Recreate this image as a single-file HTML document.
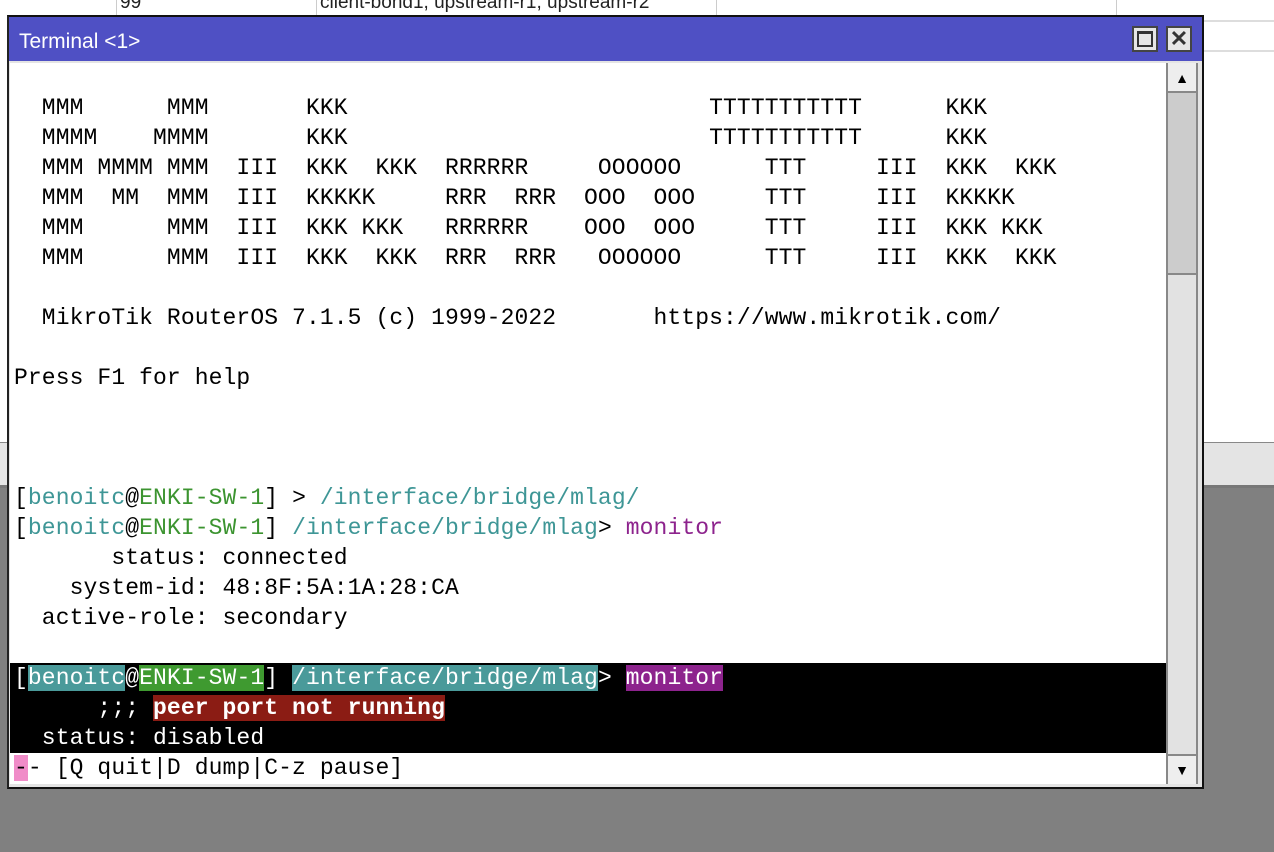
<!DOCTYPE html>
<html><head><meta charset="utf-8"><style>
html,body{margin:0;padding:0;width:1274px;height:852px;overflow:hidden;background:#fff;position:relative;font-family:"Liberation Sans",sans-serif}
.bgtop{position:absolute;left:0;top:0;width:1274px;height:490px;background:#fff}
.band{position:absolute;left:0;top:442px;width:1274px;height:42px;background:#e4e4e4;border-top:1px solid #888;border-bottom:3px solid #777}
.gray{position:absolute;left:0;top:488px;width:1274px;height:364px;background:#808080}
.hl{position:absolute;left:1203px;width:71px;height:2px;background:#ddd}
.tt{position:absolute;top:-8px;font-size:19px;color:#222}
.win{position:absolute;left:7px;top:15px;width:1193px;height:770px;border:2px solid #111;border-left-color:#222;background:#e4e4e4}
.title{position:absolute;left:0;top:0;width:1193px;height:44px;background:#4f50c4;color:#fff;font-size:21px;line-height:50px;padding-left:10px;box-sizing:border-box}
.btn{position:absolute;top:9px;width:26px;height:26px;background:#e6e6e6;border:2px solid #444;box-sizing:border-box}
.term{position:absolute;left:1px;top:46px;width:1156px;height:721px;background:#fff;overflow:hidden}
.row{position:absolute;left:4px;height:30px;line-height:31px;white-space:pre;font-family:"Liberation Mono",monospace;font-size:23px;letter-spacing:0.1px;color:#000}
.blk{position:absolute;left:0;top:600px;width:1156px;height:90px;background:#000}
.sb{position:absolute;left:1157px;top:46px;width:32px;height:721px;background:#e2e2e2;border-left:2px solid #888;border-right:2px solid #888;box-sizing:border-box}
.t{color:#3e9696}.g{color:#3c9430}.p{color:#8d238d}
.bt{background:#4a9a9a;color:#fff}.bg{background:#3f9a30;color:#fff}.bp{background:#8d238d;color:#fff}.br{background:#8b1c14;color:#fff;font-weight:bold}
</style></head><body>
<div class="bgtop"></div>
<div class="hl" style="top:20px"></div><div class="hl" style="top:50px"></div>
<div style="position:absolute;left:116px;top:0;width:1px;height:15px;background:#ccc"></div>
<div style="position:absolute;left:316px;top:0;width:1px;height:15px;background:#ccc"></div>
<div style="position:absolute;left:716px;top:0;width:1px;height:15px;background:#ccc"></div>
<div style="position:absolute;left:1116px;top:0;width:1px;height:15px;background:#ccc"></div>
<div class="tt" style="left:120px">99</div>
<div class="tt" style="left:320px">client-bond1, upstream-r1, upstream-r2</div>
<div class="band"></div>
<div class="gray"></div>
<div class="win">
 <div class="title">Terminal &lt;1&gt;</div>
 <div class="btn" style="left:1123px"><div style="position:absolute;left:3px;top:3px;width:16px;height:16px;border:2px solid #333;border-top-width:3px;box-sizing:border-box"></div></div>
 <div class="btn" style="left:1157px"><div style="position:absolute;left:0;top:-3px;width:22px;text-align:center;font-size:22px;font-weight:bold;color:#333;line-height:28px">✕</div></div>
 <div class="term">
  <div class="blk"></div>
  <div class="row" style="top:30px">  MMM      MMM       KKK                          TTTTTTTTTTT      KKK</div>
  <div class="row" style="top:60px">  MMMM    MMMM       KKK                          TTTTTTTTTTT      KKK</div>
  <div class="row" style="top:90px">  MMM MMMM MMM  III  KKK  KKK  RRRRRR     OOOOOO      TTT     III  KKK  KKK</div>
  <div class="row" style="top:120px">  MMM  MM  MMM  III  KKKKK     RRR  RRR  OOO  OOO     TTT     III  KKKKK</div>
  <div class="row" style="top:150px">  MMM      MMM  III  KKK KKK   RRRRRR    OOO  OOO     TTT     III  KKK KKK</div>
  <div class="row" style="top:180px">  MMM      MMM  III  KKK  KKK  RRR  RRR   OOOOOO      TTT     III  KKK  KKK</div>
  <div class="row" style="top:240px">  MikroTik RouterOS 7.1.5 (c) 1999-2022       https://www.mikrotik.com/</div>
  <div class="row" style="top:300px">Press F1 for help</div>
  <div class="row" style="top:420px">[<span class="t">benoitc</span>@<span class="g">ENKI-SW-1</span>] &gt; <span class="t">/interface/bridge/mlag/</span></div>
  <div class="row" style="top:450px">[<span class="t">benoitc</span>@<span class="g">ENKI-SW-1</span>] <span class="t">/interface/bridge/mlag</span>&gt; <span class="p">monitor</span></div>
  <div class="row" style="top:480px">       status: connected</div>
  <div class="row" style="top:510px">    system-id: 48:8F:5A:1A:28:CA</div>
  <div class="row" style="top:540px">  active-role: secondary</div>
  <div class="row" style="top:600px;color:#fff">[<span class="bt">benoitc</span>@<span class="bg">ENKI-SW-1</span>] <span class="bt">/interface/bridge/mlag</span>&gt; <span class="bp">monitor</span></div>
  <div class="row" style="top:630px;color:#fff">      ;;; <span class="br">peer port not running</span></div>
  <div class="row" style="top:660px;color:#fff">  status: disabled</div>
  <div class="row" style="top:690px"><span style="background:#f08cc8">-</span>- [Q quit|D dump|C-z pause]</div>
 </div>
 <div class="sb">
  <div style="position:absolute;left:0;top:0;width:28px;height:28px;background:#eee;border-bottom:2px solid #888;text-align:center;font-size:14px;line-height:30px">&#9650;</div>
  <div style="position:absolute;left:0;top:30px;width:28px;height:180px;background:#ccc;border-bottom:2px solid #888"></div>
  <div style="position:absolute;left:0;bottom:0;width:28px;height:28px;background:#eee;border-top:2px solid #888;text-align:center;font-size:14px;line-height:28px">&#9660;</div>
 </div>
</div>
</body></html>
